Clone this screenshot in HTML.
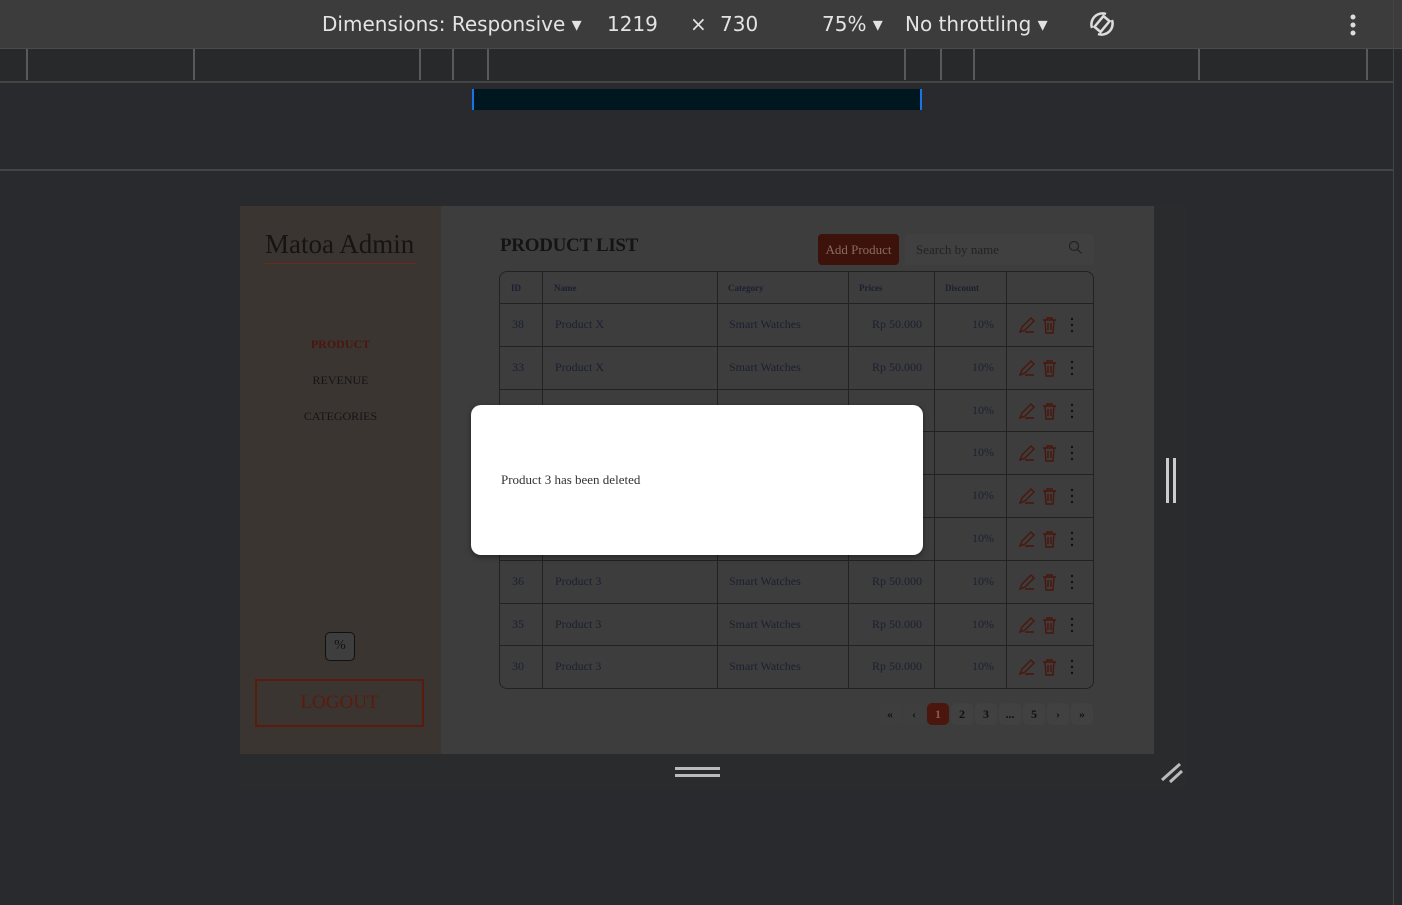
<!DOCTYPE html>
<html><head><meta charset="utf-8"><style>
*{margin:0;padding:0;box-sizing:border-box}
body{width:1402px;height:905px;background:#292a2d;position:relative;overflow:hidden;font-family:"Liberation Serif",serif}
.abs{position:absolute}
.tb{left:0;top:0;width:1402px;height:49px;background:#3c3c3c;border-bottom:1px solid #4a4a4a;color:#e3e3e3;font-family:"DejaVu Sans","Liberation Sans",sans-serif;font-size:20px}
.tb span{position:absolute;top:12px;white-space:nowrap}
.ruler{left:0;top:49px;width:1393px;height:34px;background:#28292b;border-bottom:2px solid #444}
.tick{top:49px;width:2px;height:31px;background:#5a5a5a}
.sep{left:0;top:169px;width:1393px;height:2px;background:#444}
.vline{left:1393px;top:0;width:1px;height:905px;background:#444}
.frame{left:240px;top:206px;width:914px;height:548px;background:#3d3d3d}
.side{left:240px;top:206px;width:201px;height:548px;background:#3b3532}
.cell{position:absolute;font-size:12px;color:#1a2030}
.th{font-size:9px;font-weight:bold;color:#1a2030}
.red{color:#4a160d}
.pg{position:absolute;top:703px;width:22px;height:22px;border-radius:5px;background:#414141;font-size:12px;text-align:center;line-height:22px;color:#111;font-weight:bold}
</style></head><body>
<div class="abs" style="left:710px;top:0;width:500px;height:5px;background:#1e1e1e;border-radius:0 0 8px 8px"></div>
<div class="abs tb">
<span style="left:322px">Dimensions: Responsive ▾</span>
<span style="left:607px">1219</span>
<span style="left:690px">×</span>
<span style="left:720px">730</span>
<span style="left:822px">75% ▾</span>
<span style="left:905px">No throttling ▾</span>
<svg class="abs" style="left:1086px;top:8px" width="32" height="32" viewBox="0 0 32 32" fill="none" stroke="#ddd" stroke-width="2.5"><path d="M6 20a11 11 0 0 1 14-14M26 12a11 11 0 0 1-14 14"/><rect x="12" y="9" width="8" height="14" transform="rotate(40 16 16)"/></svg>
<svg class="abs" style="left:1348px;top:13px" width="10" height="24"><circle cx="5" cy="4" r="2.5" fill="#ddd"/><circle cx="5" cy="12" r="2.5" fill="#ddd"/><circle cx="5" cy="20" r="2.5" fill="#ddd"/></svg>
</div>
<div class="abs ruler"></div>
<div class="abs tick" style="left:26px"></div><div class="abs tick" style="left:193px"></div><div class="abs tick" style="left:419px"></div><div class="abs tick" style="left:452px"></div><div class="abs tick" style="left:487px"></div><div class="abs tick" style="left:904px"></div><div class="abs tick" style="left:940px"></div><div class="abs tick" style="left:973px"></div><div class="abs tick" style="left:1198px"></div><div class="abs tick" style="left:1366px"></div>
<div class="abs" style="left:472px;top:89px;width:450px;height:21px;background:#001720;border-left:2px solid #1a73e8;border-right:2px solid #1a73e8"></div>
<div class="abs sep"></div>
<div class="abs vline"></div>
<div class="abs" style="left:240px;top:754px;width:946px;height:36px;background:#2a2b2d"></div>
<div class="abs" style="left:1154px;top:206px;width:32px;height:548px;background:#2a2b2d"></div>
<div class="abs" style="left:1166px;top:458px;width:3px;height:45px;background:#ccc"></div>
<div class="abs" style="left:1173px;top:458px;width:3px;height:45px;background:#ccc"></div>
<div class="abs" style="left:675px;top:767px;width:45px;height:3px;background:#bbb"></div>
<div class="abs" style="left:675px;top:774px;width:45px;height:3px;background:#bbb"></div>
<svg class="abs" style="left:1160px;top:760px" width="24" height="24"><path d="M2 20L20 4M10 22L22 11" stroke="#bbb" stroke-width="3"/></svg>
<div class="abs frame"></div>
<div class="abs side"></div>
<div class="abs" style="left:265px;top:229px;font-size:27px;color:#141414">Matoa Admin</div>
<div class="abs" style="left:264px;top:263px;width:151px;height:1px;background:#6a2a1e"></div>
<div class="abs red" style="left:240px;width:201px;text-align:center;top:337px;font-size:12px;font-weight:bold">PRODUCT</div>
<div class="abs" style="left:240px;width:201px;text-align:center;top:373px;font-size:12px;color:#141414">REVENUE</div>
<div class="abs" style="left:240px;width:201px;text-align:center;top:409px;font-size:12px;color:#141414">CATEGORIES</div>
<div class="abs" style="left:325px;top:632px;width:30px;height:29px;border:1.5px solid #111;border-radius:5px;background:#3e3e3e;font-size:14px;text-align:center;line-height:26px;color:#111">%</div>
<div class="abs" style="left:255px;top:679px;width:169px;height:48px;border:2px solid #5a1a0e;color:#5a1a0e;font-size:19px;text-align:center;line-height:44px">LOGOUT</div>
<div class="abs" style="left:500px;top:235px;font-size:19px;font-weight:bold;color:#141414;letter-spacing:-0.3px">PRODUCT LIST</div>
<div class="abs" style="left:818px;top:234px;width:81px;height:31px;background:#3d120a;border-radius:4px;color:#8a6a64;font-size:13px;text-align:center;line-height:31px">Add Product</div>
<div class="abs" style="left:905px;top:234px;width:189px;height:31px;background:#404040;border-radius:4px;color:#222;font-size:13px;line-height:31px;padding-left:11px">Search by name</div>
<svg class="abs" style="left:1068px;top:240px" width="14" height="14" fill="none" stroke="#222" stroke-width="1.2"><circle cx="6" cy="6" r="4.5"/><path d="M9.5 9.5l4 4"/></svg>
<div class="abs" style="left:499px;top:271px;width:595px;height:418px;border:1px solid #222;border-radius:8px"></div>
<div id="grid"></div>
<div class="pg" style="left:879px;background:#3e3e3e">«</div>
<div class="pg" style="left:903px;background:#3e3e3e">‹</div>
<div class="pg" style="left:927px;background:#4a160d;color:#8a5a52">1</div>
<div class="pg" style="left:951px">2</div>
<div class="pg" style="left:975px">3</div>
<div class="pg" style="left:999px">...</div>
<div class="pg" style="left:1023px">5</div>
<div class="pg" style="left:1047px">›</div>
<div class="pg" style="left:1071px">»</div>
<script>
var g='',cols=[542,717,848,934,1006];
cols.forEach(function(x){g+='<div class="abs" style="left:'+x+'px;top:272px;width:1px;height:416px;background:#222"></div>'});
var hs=[['ID',511],['Name',554],['Category',728],['Prices',859],['Discount',945]];
hs.forEach(function(h){g+='<div class="cell th" style="left:'+h[1]+'px;top:283px">'+h[0]+'</div>'});
var rows=[['38','Product X'],['33','Product X'],['37','Product 3'],['34','Product 3'],['32','Product 3'],['31','Product 3'],['36','Product 3'],['35','Product 3'],['30','Product 3']];
rows.forEach(function(r,i){var t=303+i*42.8;
g+='<div class="abs" style="left:500px;top:'+t+'px;width:593px;height:1px;background:#222"></div>';
var y=t+14;
g+='<div class="cell" style="left:512px;top:'+y+'px">'+r[0]+'</div><div class="cell" style="left:555px;top:'+y+'px">'+r[1]+'</div><div class="cell" style="left:729px;top:'+y+'px">Smart Watches</div><div class="cell" style="left:848px;width:74px;text-align:right;top:'+y+'px">Rp 50.000</div><div class="cell" style="left:934px;width:60px;text-align:right;top:'+y+'px">10%</div>';
g+='<svg class="abs" style="left:1018px;top:'+(t+13)+'px" width="62" height="18" fill="none" stroke="#4a160d" stroke-width="1.4"><path d="M2 16l2-5 9-9 3 3-9 9z M7 16h9"/><path d="M25 4h13M29 4V2h5v2M27 4l1 13h7l1-13M30 7v7M33 7v7"/><circle cx="54" cy="3" r="1.2" fill="#111" stroke="none"/><circle cx="54" cy="9" r="1.2" fill="#111" stroke="none"/><circle cx="54" cy="15" r="1.2" fill="#111" stroke="none"/></svg>';
});
document.getElementById('grid').innerHTML=g;
</script>
<div class="abs" style="left:471px;top:405px;width:452px;height:150px;background:#fff;border-radius:10px;box-shadow:0 2px 6px rgba(0,0,0,.4)"></div>
<div class="abs" style="left:501px;top:472px;font-size:13px;color:#333">Product 3 has been deleted</div>
</body></html>
